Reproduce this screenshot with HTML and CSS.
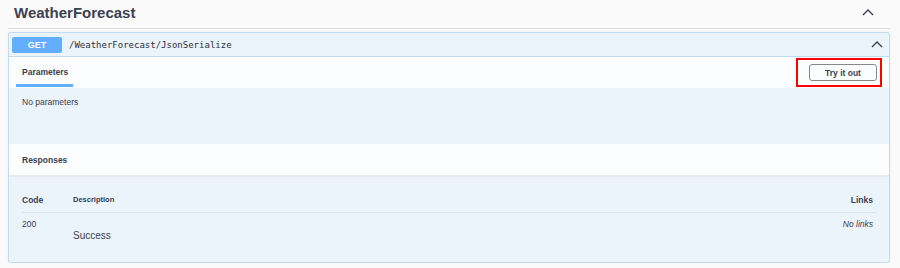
FILE: index.html
```html
<!DOCTYPE html>
<html>
<head>
    <title>WeatherForecast</title>
    <link rel="stylesheet" href="styles.css">
</head>
<body>
    <div class="tag">
        <h3 class="tag-title">WeatherForecast</h3>
        <svg class="chevron" width="12" height="7" viewBox="0 0 12 7"><polyline points="1,6 6,1 11,6" /></svg>
    </div>

    <div class="opblock">
        <div class="summary">
            <span class="method">GET</span>
            <span class="path">/WeatherForecast/JsonSerialize</span>
            <svg class="chevron small" width="12" height="7" viewBox="0 0 12 7"><polyline points="1,6 6,1 11,6" /></svg>
        </div>

        <div class="section-header tabs">
            <div class="tab">Parameters</div>
            <div class="try-wrap">
                <button class="try-out">Try it out</button>
            </div>
        </div>
        <div class="params-body">No parameters</div>

        <div class="section-header responses-header">
            <div class="section-title">Responses</div>
        </div>
        <div class="responses-body">
            <div class="row head">
                <div class="col-code">Code</div>
                <div class="col-desc small">Description</div>
                <div class="col-links">Links</div>
            </div>
            <div class="row">
                <div class="col-code light">200</div>
                <div class="col-desc success">Success</div>
                <div class="col-links italic">No links</div>
            </div>
        </div>
    </div>
</body>
</html>
```

FILE: styles.css
```css
body {
    margin: 0;
    padding: 0 10px 0 8px;
    background: #fafafa;
    font-family: "Liberation Sans", Arial, sans-serif;
    color: #3b4151;
}
.tag {
    display: flex;
    align-items: center;
    justify-content: space-between;
    height: 24px;
    padding: 0 16px 4px 6px;
    border-bottom: 1px solid #dcdde0;
}
.tag-title {
    margin: 0;
    font-size: 15px;
    font-weight: bold;
}
.chevron polyline {
    fill: none;
    stroke: #3b4151;
    stroke-width: 1.4;
}
.opblock {
    margin-top: 3px;
    border: 1px solid #c3dbf0;
    border-radius: 3px;
    background: #ebf3fb;
    box-shadow: 0 0 2px rgba(0,0,0,0.08);
}
.summary {
    display: flex;
    align-items: center;
    height: 23px;
    padding: 0 3px;
    border-bottom: 1px solid #c3dbf0;
}
.method {
    width: 50px;
    height: 16px;
    line-height: 16px;
    text-align: center;
    background: #61affe;
    color: white;
    font-weight: bold;
    font-size: 9px;
    border-radius: 2px;
}
.path {
    margin-left: 7px;
    font-family: "DejaVu Sans Mono", monospace;
    font-size: 9px;
    color: #2b3040;
    flex: 1;
}
.chevron.small {
    margin-right: 3px;
}
.section-header {
    display: flex;
    align-items: center;
    background: #fcfdfe;
}
.tabs {
    height: 31px;
    padding: 0 7px;
    justify-content: space-between;
}
.tab {
    align-self: flex-end;
    font-size: 8.5px;
    font-weight: bold;
    padding: 0 5px 7px 6px;
    border-bottom: 3px solid #61affe;
    margin-bottom: 1px;
}
.try-wrap {
    border: 2px solid #f00;
    padding: 4px 3px 4px 11px;
}
.try-out {
    display: block;
    width: 68px;
    height: 17px;
    padding: 0;
    background: transparent;
    border: 1px solid #888;
    border-radius: 3px;
    font-family: "Liberation Sans", Arial, sans-serif;
    font-size: 8.5px;
    font-weight: bold;
    color: #3b4151;
}
.params-body {
    height: 47px;
    padding: 9px 13px 0;
    font-size: 8.5px;
}
.responses-header {
    height: 31px;
    padding: 0 13px;
    border-bottom: 2px solid #e4eaf0;
}
.section-title {
    font-size: 8.5px;
    font-weight: bold;
}
.responses-body {
    padding: 14px 12px 0 13px;
    height: 71px;
}
.row {
    display: flex;
}
.row.head {
    height: 21px;
    line-height: 18px;
    border-bottom: 1px solid #dde5ee;
    margin-bottom: 6px;
}
.col-code {
    width: 51px;
    font-size: 8.5px;
    font-weight: bold;
}
.col-desc {
    flex: 1;
}
.col-desc.small {
    font-size: 7.5px;
    font-weight: bold;
}
.col-links {
    font-size: 8.5px;
    font-weight: bold;
    padding-right: 4px;
}
.col-code.light {
    font-weight: normal;
    font-size: 8.5px;
}
.success {
    font-size: 10px;
    padding-top: 11px;
}
.italic {
    font-style: italic;
    font-weight: normal;
}
```
